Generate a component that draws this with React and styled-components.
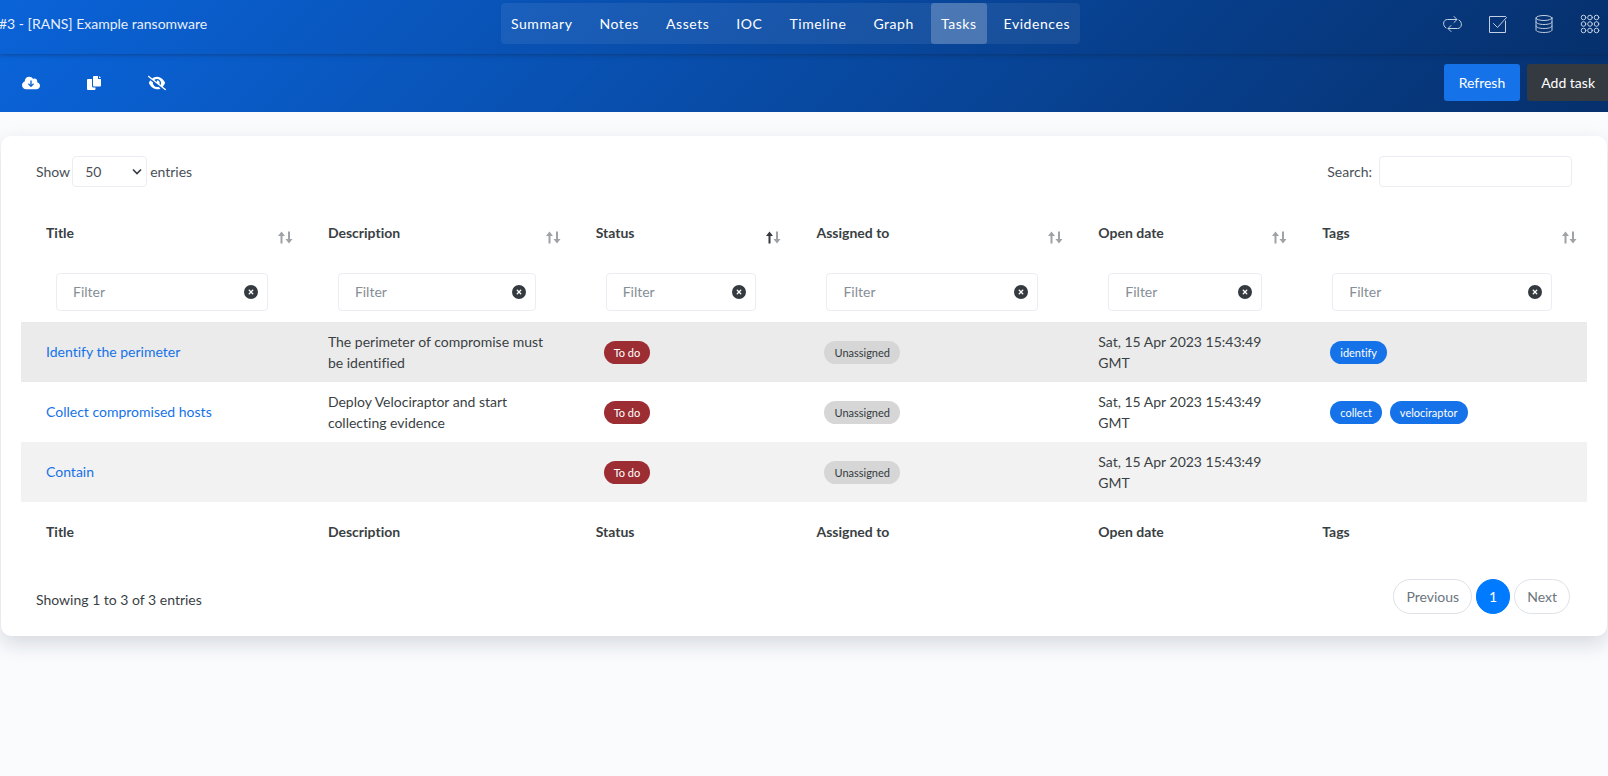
import React from "react";
import styled, { createGlobalStyle, css } from "styled-components";
import { FaCloudArrowDown, FaEyeSlash, FaCircleXmark } from "react-icons/fa6";

const Global = createGlobalStyle`
  *, *::before, *::after { box-sizing: border-box; }
  body {
    margin: 0;
    background: #f9fbfd;
    color: #3a3f44;
    font: 400 14px/21px Lato, sans-serif;
    font-variant-ligatures: no-common-ligatures;
  }
  button, input, select { font: inherit; color: inherit; }
  a { color: #1572e8; text-decoration: none; }
`;

const Page = styled.div`
  display: flex;
  flex-direction: column;
  min-height: 100vh;
`;

const gradient = css`
  background: linear-gradient(-45deg, #06306d, #0a63d8);
`;

const Header = styled.header`
  ${gradient}
  position: relative;
  display: grid;
  grid-template-columns: 1fr auto 1fr;
  align-items: start;
  height: 54px;
  padding-top: 3px;
  box-shadow: 0 0 5px rgba(18, 23, 39, 0.5);
`;

const CaseName = styled.span`
  margin-left: -1px;
  color: #e8effa;
  line-height: 41px;
`;

const Nav = styled.nav`
  display: flex;
  gap: 7px;
  margin-right: 27px;
  border-radius: 4px;
  background: rgba(255, 255, 255, 0.07);
`;

const NavLink = styled.a`
  padding: 10px;
  border-radius: 3px;
  color: #fff;
  letter-spacing: 0.04em;
  background: ${(p) => (p.$active ? "rgba(255, 255, 255, 0.22)" : "transparent")};
`;

const Tools = styled.div`
  display: flex;
  justify-content: flex-end;
  align-items: center;
  gap: 26px;
  height: 41px;
  padding-right: 8px;
`;

const IconButton = styled.button`
  display: flex;
  padding: 0;
  border: 0;
  background: none;
  color: ${(p) => p.$color || "#fff"};
  cursor: pointer;
`;

const SubBar = styled.div`
  ${gradient}
  display: flex;
  justify-content: space-between;
  align-items: center;
  padding: 10px 0 11px 22px;
`;

const Actions = styled.div`
  display: flex;
  align-items: center;
  gap: ${(p) => p.$gap}px;
`;

const Button = styled.button`
  height: 37px;
  padding: 0 ${(p) => (p.$dark ? 13 : 15)}px 0 ${(p) => (p.$dark ? 14 : 15)}px;
  border: 0;
  border-radius: ${(p) => (p.$dark ? "3px 0 0 3px" : "3px")};
  background: ${(p) => (p.$dark ? "#343a40" : "#1572e8")};
  color: #fff;
  cursor: pointer;
`;

const Card = styled.main`
  margin: 24px 1px 0;
  padding: 20px 20px 22px;
  border-radius: 10px;
  background: #fff;
  box-shadow: 0 8px 20px rgba(20, 30, 60, 0.15);
`;

const Row = styled.div`
  display: flex;
  justify-content: space-between;
  align-items: center;
  padding: 0 15px;
`;

const Label = styled.label`
  display: flex;
  align-items: center;
  gap: ${(p) => p.$gap}px;
  color: #495057;
`;

const field = css`
  border: 1px solid #ebedf2;
  border-radius: 4px;
  background: #fff;
  outline: 0;
`;

const SelectBox = styled.span`
  position: relative;
  display: flex;
  margin-right: 1px;
  svg {
    position: absolute;
    right: 5px;
    top: 12px;
    pointer-events: none;
  }
`;

const Select = styled.select`
  ${field}
  appearance: none;
  width: 75px;
  height: 31px;
  padding: 0 12px;
`;

const SearchInput = styled.input`
  ${field}
  width: 193px;
  height: 31px;
  padding: 0 8px;
`;

const Table = styled.table`
  width: 100%;
  margin: 15px 0 17px;
  border-collapse: collapse;
  table-layout: fixed;
`;

const Col = styled.col`
  width: ${(p) => p.$w}%;
`;

const Th = styled.th`
  height: 60px;
  padding: 0 25px 1px;
  text-align: left;
  font-weight: 700;
`;

const HeadCell = styled.div`
  display: flex;
  justify-content: space-between;
  margin-right: -15px;
  padding-top: 2px;
  svg {
    margin-top: 9px;
    flex: none;
  }
`;

const FilterCell = styled.td`
  height: 60px;
  padding: 0 35px;
`;

const FilterBox = styled.div`
  ${field}
  display: flex;
  align-items: center;
  height: 38px;
  padding: 0 9px 0 16px;
`;

const FilterInput = styled.input`
  flex: 1;
  min-width: 0;
  padding: 0 0 2px;
  border: 0;
  outline: 0;
  background: none;
  &::placeholder { color: #868e96; opacity: 1; }
`;

const BodyRow = styled.tr`
  background: ${(p) => p.$bg};
`;

const Td = styled.td`
  height: 60px;
  padding: 9px 25px;
`;

const TaskLink = styled.a`
  display: block;
  padding-bottom: 1px;
`;

const Badges = styled.div`
  display: flex;
  gap: 8px;
  padding-left: 8px;
`;

const tones = {
  danger: ["#9b2d33", "#fff"],
  muted: ["#d6d6d6", "#343a40"],
  primary: ["#1572e8", "#fff"],
};

const Badge = styled.span`
  padding: 0 10px;
  border-radius: 12px;
  font-size: 11px;
  line-height: 23px;
  background: ${(p) => tones[p.$tone][0]};
  color: ${(p) => tones[p.$tone][1]};
`;

const Info = styled.span`
  padding-top: 6px;
`;

const Pages = styled.nav`
  display: flex;
  gap: 4px;
  padding-right: 2px;
`;

const PageButton = styled.button`
  height: 35px;
  padding: 0 12px;
  border: 1px solid ${(p) => (p.$active ? "#007bff" : "#dee2e6")};
  border-radius: 18px;
  background: ${(p) => (p.$active ? "#007bff" : "#fff")};
  color: ${(p) => (p.$active ? "#fff" : "#6c757d")};
`;

const LineIcon = ({ children }) => (
  <svg width="20" height="20" viewBox="0 0 20 20" fill="none" stroke="currentColor" strokeWidth="1" strokeLinecap="round" strokeLinejoin="round">
    {children}
  </svg>
);

const RepeatIcon = () => (
  <LineIcon>
    <path d="M4 14C.3 12 .8 5.500 5.500 5.500h9M12 2.500l3 3-3 3" />
    <path d="M17 6c3.700 2 3.200 8.500-1.500 8.500h-9M9 11.500l-3 3 3 3" />
  </LineIcon>
);
const CheckIcon = () => (
  <LineIcon>
    <path d="M17.500 7v11.500h-16v-16h16M5.500 9.500l4 4 9-10" />
  </LineIcon>
);
const DatabaseIcon = () => (
  <LineIcon>
    <ellipse cx="10" cy="4" rx="8" ry="2.500" />
    <path d="M2 4v12c0 1.400 3.600 2.500 8 2.500s8-1.100 8-2.500V4M2 8c0 1.400 3.600 2.500 8 2.500S18 9.400 18 8M2 12c0 1.400 3.600 2.500 8 2.500s8-1.100 8-2.500" />
  </LineIcon>
);
const GridIcon = () => (
  <LineIcon>
    {[3.5, 10, 16.5].flatMap((y) => [3.5, 10, 16.5].map((x) => <circle key={x + "-" + y} cx={x} cy={y} r="2.300" />))}
  </LineIcon>
);

const CopyIcon = () => (
  <svg width="16" height="16" viewBox="0 0 16 16" fill="currentColor">
    <path d="M8 1h4v3h3v6.500a1 1 0 0 1-1 1H8a1 1 0 0 1-1-1V2a1 1 0 0 1 1-1zM13 1l2 2h-2zM2 4h4v7a1.500 1.500 0 0 0 1.500 1.500H9.500V14a1 1 0 0 1-1 1H2a1 1 0 0 1-1-1V5a1 1 0 0 1 1-1z" />
  </svg>
);

const SortIcon = ({ up }) => (
  <svg width="15" height="13" viewBox="0 0 15 13">
    <path fill={up ? "#343a40" : "#9fa2a6"} d="M3.500 .5L7 5H4.500v7.500h-2V5H0z" />
    <path fill="#9fa2a6" d="M11 12.500L14.500 8H12V.5h-2V8H7.500z" />
  </svg>
);

const columns = [
  { name: "Title", w: 18 },
  { name: "Description", w: 17.1 },
  { name: "Status", w: 14.1, up: true },
  { name: "Assigned to", w: 18 },
  { name: "Open date", w: 14.3 },
  { name: "Tags", w: 18.5 },
];

const tasks = [
  { title: "Identify the perimeter", text: "The perimeter of compromise must be identified", tags: ["identify"], bg: "#ebebeb" },
  { title: "Collect compromised hosts", text: "Deploy Velociraptor and start collecting evidence", tags: ["collect", "velociraptor"], bg: "#fff" },
  { title: "Contain", text: "", tags: [], bg: "#f2f2f2" },
];

const sections = ["Summary", "Notes", "Assets", "IOC", "Timeline", "Graph", "Tasks", "Evidences"];

export default function App() {
  return (
    <Page>
      <Global />
      <Header>
        <CaseName>#3 - [RANS] Example ransomware</CaseName>
        <Nav aria-label="Case">
          {sections.map((s) => (
            <NavLink key={s} href="#" $active={s === "Tasks"}>{s}</NavLink>
          ))}
        </Nav>
        <Tools>
          <IconButton $color="#c3d0e2" aria-label="Switch case"><RepeatIcon /></IconButton>
          <IconButton $color="#c3d0e2" aria-label="My tasks"><CheckIcon /></IconButton>
          <IconButton $color="#c3d0e2" aria-label="Datastore"><DatabaseIcon /></IconButton>
          <IconButton $color="#c3d0e2" aria-label="Modules"><GridIcon /></IconButton>
        </Tools>
      </Header>
      <SubBar>
        <Actions $gap={46}>
          <IconButton aria-label="Download"><FaCloudArrowDown size={18} /></IconButton>
          <IconButton aria-label="Copy"><CopyIcon /></IconButton>
          <IconButton aria-label="Hide columns"><FaEyeSlash size={18} /></IconButton>
        </Actions>
        <Actions $gap={7}>
          <Button>Refresh</Button>
          <Button $dark>Add task</Button>
        </Actions>
      </SubBar>
      <Card>
        <Row>
          <Label $gap={2}>
            Show
            <SelectBox>
              <Select defaultValue="50"><option>10</option><option>25</option><option>50</option></Select>
              <svg width="10" height="8" viewBox="0 0 10 8" fill="none" stroke="#343a40" strokeWidth="1.6"><path d="M1 1.500l4 4 4-4" /></svg>
            </SelectBox>
            entries
          </Label>
          <Label $gap={7}>
            Search:
            <SearchInput type="search" />
          </Label>
        </Row>
        <Table>
          <colgroup>{columns.map((c) => <Col key={c.name} $w={c.w} />)}</colgroup>
          <thead>
            <tr>
              {columns.map((c) => (
                <Th key={c.name} scope="col"><HeadCell>{c.name}<SortIcon up={c.up} /></HeadCell></Th>
              ))}
            </tr>
            <tr>
              {columns.map((c) => (
                <FilterCell key={c.name}>
                  <FilterBox>
                    <FilterInput placeholder="Filter" aria-label={"Filter " + c.name} />
                    <IconButton $color="#343a40" aria-label="Clear filter"><FaCircleXmark size={14} /></IconButton>
                  </FilterBox>
                </FilterCell>
              ))}
            </tr>
          </thead>
          <tbody>
            {tasks.map((t) => (
              <BodyRow key={t.title} $bg={t.bg}>
                <Td><TaskLink href="#">{t.title}</TaskLink></Td>
                <Td>{t.text}</Td>
                <Td><Badges><Badge $tone="danger">To do</Badge></Badges></Td>
                <Td><Badges><Badge $tone="muted">Unassigned</Badge></Badges></Td>
                <Td>Sat, 15 Apr 2023 15:43:49 GMT</Td>
                <Td><Badges>{t.tags.map((g) => <Badge key={g} $tone="primary">{g}</Badge>)}</Badges></Td>
              </BodyRow>
            ))}
          </tbody>
          <tfoot>
            <tr>{columns.map((c) => <Th key={c.name} scope="col">{c.name}</Th>)}</tr>
          </tfoot>
        </Table>
        <Row>
          <Info>Showing 1 to 3 of 3 entries</Info>
          <Pages aria-label="Pages">
            <PageButton>Previous</PageButton>
            <PageButton $active>1</PageButton>
            <PageButton>Next</PageButton>
          </Pages>
        </Row>
      </Card>
    </Page>
  );
}
